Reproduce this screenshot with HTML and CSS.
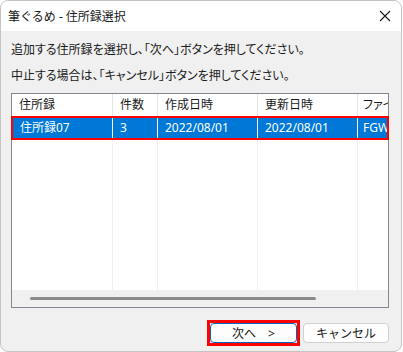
FILE: index.html
```html
<!DOCTYPE html>
<html lang="ja">
<head>
    <meta charset="UTF-8">
    <title>筆ぐるめ - 住所録選択</title>
    <link rel="stylesheet" href="styles.css">
</head>
<body>
    <div class="window">
        <div class="titlebar">
            <span class="title">筆ぐるめ - 住所録選択</span>
            <svg class="close" width="12" height="12" viewBox="0 0 12 12">
                <path d="M1 1 L11 11 M11 1 L1 11" stroke="#1a1a1a" stroke-width="1.1" fill="none"/>
            </svg>
        </div>

        <div class="content">
            <p class="msg">追加する住所録を選択し、「次へ」ボタンを押してください。</p>
            <p class="msg">中止する場合は、「キャンセル」ボタンを押してください。</p>

            <div class="listview">
                <div class="row header">
                    <div class="cell c1">住所録</div>
                    <div class="cell c2">件数</div>
                    <div class="cell c3">作成日時</div>
                    <div class="cell c4">更新日時</div>
                    <div class="cell c5">ファイ</div>
                </div>
                <div class="lv-body">
                    <div class="row selected">
                        <div class="cell c1">住所録07</div>
                        <div class="cell c2">3</div>
                        <div class="cell c3">2022/08/01</div>
                        <div class="cell c4">2022/08/01</div>
                        <div class="cell c5">FGW</div>
                    </div>
                </div>
                <div class="hscroll">
                    <div class="thumb"></div>
                </div>
            </div>

            <div class="buttons">
                <span class="highlight">
                    <button class="btn primary">次へ　&gt;</button>
                </span>
                <button class="btn">キャンセル</button>
            </div>
        </div>
    </div>
</body>
</html>
```

FILE: styles.css
```css
* {
    margin: 0;
    padding: 0;
    box-sizing: border-box;
}

body {
    background: #ffffff;
    font-family: "Noto Sans", "Noto Sans CJK JP", sans-serif;
    font-size: 12px;
    color: #1a1a1a;
}

.window {
    width: 402px;
    height: 352px;
    border: 1px solid #c4c4c4;
    border-radius: 8px;
    background: #f0f0f0;
    overflow: hidden;
    display: flex;
    flex-direction: column;
}

.titlebar {
    height: 30px;
    background: #ffffff;
    display: flex;
    align-items: center;
    justify-content: space-between;
    padding: 0 10px 0 7px;
}

.title {
    font-size: 12px;
}

.content {
    padding: 9px 0 0 10px;
}

.msg {
    height: 26px;
    line-height: 20px;
    font-feature-settings: "palt";
}

.listview {
    margin-top: 1px;
    width: 378px;
    height: 215px;
    border: 1px solid #828790;
    background: #ffffff;
    display: flex;
    flex-direction: column;
}

.row {
    display: flex;
    height: 22px;
    flex-shrink: 0;
}

.cell {
    padding-left: 7px;
    line-height: 22px;
    white-space: nowrap;
    overflow: hidden;
}

.c1 { width: 101px; }
.c2 { width: 45px; }
.c3 { width: 100px; }
.c4 { width: 100px; }
.c5 { width: 30px; padding-left: 5px; font-feature-settings: "palt"; }

.header .cell {
    border-right: 1px solid #e5e5e5;
}

.header .c5 {
    border-right: none;
}

.lv-body {
    flex: 1;
    padding-top: 1px;
    background-image:
        linear-gradient(#f0f0f0, #f0f0f0),
        linear-gradient(#f0f0f0, #f0f0f0),
        linear-gradient(#f0f0f0, #f0f0f0),
        linear-gradient(#f0f0f0, #f0f0f0);
    background-size: 1px 100%;
    background-repeat: no-repeat;
    background-position: 100px 0, 145px 0, 245px 0, 345px 0;
}

.selected {
    height: 20px;
    margin: 1px 0 0 1px;
    width: 374px;
    background: #0078d7;
    color: #ffffff;
    outline: 2px solid #ff0000;
}

.selected .cell {
    line-height: 20px;
    border-right: 1px solid #ffffff;
}

.selected .c1 { width: 100px; }
.selected .c5 { border-right: none; width: 29px; }

.hscroll {
    height: 17px;
    background: #f0f0f0;
    padding: 7px 0 0 18px;
}

.thumb {
    width: 286px;
    height: 3px;
    border-radius: 2px;
    background: #8a8a8a;
}

.buttons {
    display: flex;
    justify-content: flex-end;
    align-items: center;
    gap: 3px;
    width: 378px;
    margin-top: 12px;
}

.highlight {
    display: flex;
    border: 3px solid #ff0000;
}

.btn {
    height: 20px;
    width: 86px;
    font-family: inherit;
    font-size: 12px;
    color: #1a1a1a;
    background: #fdfdfd;
    border: 1px solid #d0d0d0;
    border-radius: 4px;
}

.btn.primary {
    width: 87px;
    border: 1px solid #0067c0;
}
```
